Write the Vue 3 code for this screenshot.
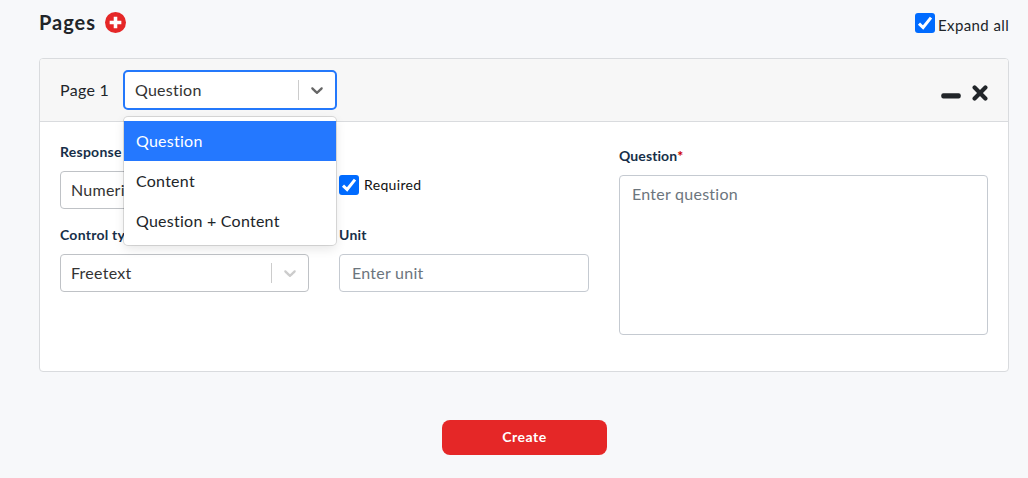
<script setup>
import { ref } from 'vue'

const expandAll = ref(true)
const required = ref(true)
const pageType = ref('Question')
const options = ['Question', 'Content', 'Question + Content']
</script>

<template>
  <main class="screen">
    <header class="top">
      <h1 class="title">Pages</h1>
      <svg class="add" viewBox="8 8 496 496">
        <circle cx="256" cy="256" r="248" fill="#e52727" />
        <path d="M256 118V394M118 256H394" stroke="#fff" stroke-width="84" />
      </svg>
      <label class="check expand" @click="expandAll = !expandAll">
        <svg class="box" viewBox="0 0 20 20">
          <rect width="20" height="20" rx="3" fill="#006bff" />
          <path v-if="expandAll" d="M4 10.6 8.1 14.5 16 4.6" fill="none" stroke="#fff" stroke-width="3" />
        </svg>
        <span>Expand all</span>
      </label>
    </header>

    <section class="card">
      <div class="card-head">
        <span class="page-name">Page 1</span>
        <div class="select focused">
          <span class="value">{{ pageType }}</span>
          <i class="sep"></i>
          <svg class="chevron" viewBox="0 0 20 20"><path d="M4.516 7.548c0.436-0.446 1.043-0.481 1.576 0l3.908 3.747 3.908-3.747c0.533-0.481 1.141-0.446 1.574 0 0.436 0.445 0.408 1.197 0 1.615-0.406 0.418-4.695 4.502-4.695 4.502-0.217 0.223-0.502 0.335-0.787 0.335s-0.57-0.112-0.789-0.335c0 0-4.287-4.084-4.695-4.502s-0.436-1.17 0-1.615z" /></svg>
          <ul class="menu">
            <li v-for="o in options" :key="o" :class="['option', { active: o === pageType }]">{{ o }}</li>
          </ul>
        </div>
        <div class="tools">
          <svg width="20" height="20" viewBox="0 0 20 20"><rect x=".3" y="8.2" width="19.4" height="5.2" rx="2" /></svg>
          <svg width="16" height="16" viewBox="0 0 16 16"><path d="M2.6 2.6 13.4 13.4M13.4 2.6 2.6 13.4" stroke="#212529" stroke-width="4.2" stroke-linecap="round" /></svg>
        </div>
      </div>

      <div class="card-body">
        <div class="col">
          <span class="label">Response type</span>
          <div class="select"><span class="value">Numeric</span></div>
          <span class="label second">Control type</span>
          <div class="select">
            <span class="value">Freetext</span>
            <i class="sep"></i>
            <svg class="chevron" viewBox="0 0 20 20"><path d="M4.516 7.548c0.436-0.446 1.043-0.481 1.576 0l3.908 3.747 3.908-3.747c0.533-0.481 1.141-0.446 1.574 0 0.436 0.445 0.408 1.197 0 1.615-0.406 0.418-4.695 4.502-4.695 4.502-0.217 0.223-0.502 0.335-0.787 0.335s-0.57-0.112-0.789-0.335c0 0-4.287-4.084-4.695-4.502s-0.436-1.17 0-1.615z" /></svg>
          </div>
        </div>
        <div class="col middle">
          <label class="check required" @click="required = !required">
            <svg class="box" viewBox="0 0 20 20">
              <rect width="20" height="20" rx="3" fill="#006bff" />
              <path v-if="required" d="M4 10.6 8.1 14.5 16 4.6" fill="none" stroke="#fff" stroke-width="3" />
            </svg>
            <span>Required</span>
          </label>
          <span class="label second">Unit</span>
          <div class="input">Enter unit</div>
        </div>
        <div class="col wide">
          <span class="label">Question<b class="star">*</b></span>
          <div class="input area">Enter question</div>
        </div>
      </div>
    </section>

    <button class="create">Create</button>
  </main>
</template>

<style>
body { background: #f7f8fa; }
</style>

<style scoped>
* { box-sizing: border-box; }
.screen {
  width: 1028px;
  height: 478px;
  padding: 0 19px 0 39px;
  background: #f7f8fa;
  color: #212529;
  font: 16px/24px Lato, "Open Sans", sans-serif;
  letter-spacing: .25px;
  font-variant-ligatures: none;
  overflow: hidden;
  white-space: nowrap;
}
.top { display: flex; height: 58px; padding-top: 10px; align-items: flex-start; }
.title { margin: 0; width: 66px; font-size: 20px; line-height: 24px; font-weight: 700; letter-spacing: 1px; }
.add { width: 21px; height: 21px; margin-top: 2px; }
.check { display: flex; align-items: center; }
.box { width: 20px; height: 20px; flex: none; }
.expand { margin-left: auto; margin-top: 3px; height: 20px; font-size: 15px; gap: 3px; letter-spacing: .4px; }
.expand span { width: 71px; padding-top: 3px; }
.card { height: 314px; border: 1px solid #d9dbde; border-radius: 4px; background: #fff; }
.card-head {
  display: flex;
  height: 63px;
  padding: 11px 20px 0;
  border-bottom: 1px solid #d9dbde;
  border-radius: 3px 3px 0 0;
  background: #f7f7f7;
}
.page-name { width: 63px; line-height: 40px; letter-spacing: .3px; }
.select {
  position: relative;
  display: flex;
  align-items: center;
  height: 38px;
  padding-left: 10px;
  border: 1px solid #bfc2c6;
  border-radius: 4px;
  background: #fff;
  color: #333;
}
.focused { width: 214px; height: 40px; border: 2px solid #2478fb; border-radius: 5px; }
.value { flex: 1; }
.sep { width: 1px; height: 20px; background: #ccc; }
.chevron { width: 20px; height: 20px; margin: 0 8px; fill: #ccc; }
.focused .chevron { fill: #666; }
.menu {
  position: absolute;
  z-index: 2;
  top: 45px;
  left: -1px;
  width: 212px;
  height: 128px;
  margin: 0;
  padding: 4px 0;
  list-style: none;
  border-radius: 4px;
  background: #fff;
  color: #212529;
  box-shadow: 0 0 0 1px rgba(0, 0, 0, .12), 0 4px 11px rgba(0, 0, 0, .1);
}
.option { height: 40px; padding: 0 12px; line-height: 40px; }
.active { background: #2478ff; color: #fff; }
.tools { display: flex; margin: 15px 0 0 auto; gap: 11px; fill: #212529; }
.tools svg:first-child { margin-top: 0; }
.card-body { display: flex; gap: 30px; padding: 20px; }
.col { display: flex; flex-direction: column; width: 249px; }
.middle { width: 250px; }
.wide { width: 369px; }
.label { height: 29px; line-height: 19px; font-size: 14px; font-weight: 700; color: #172f49; }
.second { margin-top: 16px; }
.required { height: 38px; margin: 24px 0 5px; font-size: 14px; gap: 5px; color: #111; letter-spacing: .35px; }
.input {
  height: 38px;
  padding: 6px 12px;
  border: 1px solid #c5cad1;
  border-radius: 4px;
  background: #fff;
  color: #6c757d;
}
.wide .label { height: 33px; padding-top: 4px; letter-spacing: .1px; }
.area { height: 160px; }
.star { color: #c00; }
.create {
  display: block;
  width: 165px;
  height: 35px;
  margin: 48px 0 0 403px;
  padding: 0 0 2px;
  border: 0;
  border-radius: 8px;
  background: #e52727;
  color: #fff;
  font: 700 14px/33px Lato, sans-serif;
  letter-spacing: .5px;
}
</style>
